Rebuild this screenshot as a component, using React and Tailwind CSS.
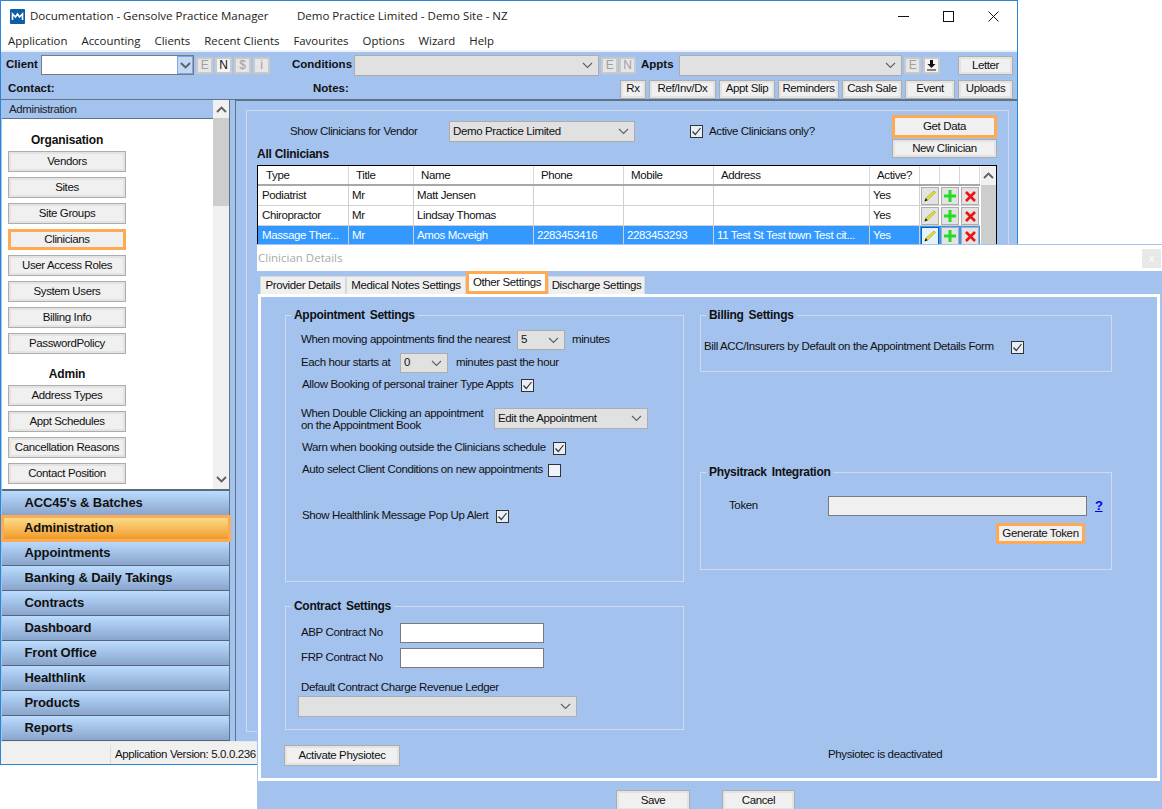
import React from "react";

const Chevron = ({ className = "", bold }) => (
  <svg width="11" height="7" viewBox="0 0 11 7" className={className} fill="none" stroke="#606060" strokeWidth={bold ? 1.9 : 1.1}><path d="M1 1l4.500 4.500L10 1" /></svg>
);
const Check = () => (
  <span className="flex h-[13px] w-[13px] shrink-0 items-center justify-center border border-[#333] bg-[#e8eef8]">
    <svg width="11" height="11" viewBox="0 0 11 11" fill="none" stroke="#333" strokeWidth="1.2"><path d="M1.500 5.500l2.800 3L9.500 2" /></svg>
  </span>
);
const Btn = ({ children, className = "", hot }) => (
  <div className={`flex shrink-0 items-center justify-center whitespace-nowrap text-[#111] ${hot ? "border-[3px] border-[#ffa952] bg-[#f0f0f0]" : "border border-[#adadad] bg-[#f0f0f0] shadow-[inset_0_0_0_2px_#e3e3e3]"} ${className}`}>{children}</div>
);
const Select = ({ value, className = "" }) => (
  <div className={`flex shrink-0 items-center justify-between border border-[#adadad] bg-[#e1e1e1] pl-[3px] pr-[5px] text-[#111] ${className}`}>
    <span className="whitespace-nowrap">{value}</span><Chevron />
  </div>
);
const Mini = ({ children, on, className = "" }) => (
  <div className={`flex h-[17px] w-[17px] shrink-0 items-center justify-center border-2 border-[#c9c9c9] text-[12px] ${on ? "border-[#bcbcbc] bg-[#f4f4f4] text-[#111]" : "bg-[#e6e6e6] text-[#a0a0a0]"} ${className}`}>{children}</div>
);
const Group = ({ title, className = "", children }) => (
  <div className={`relative border border-[#cfdbea] ${className}`}>
    <span className="absolute -top-[10px] left-[5px] whitespace-nowrap bg-[#a3c2ee] px-[3px] text-[12px] font-bold tracking-[-0.3px] [word-spacing:2px] text-[#111]">{title}</span>
    {children}
  </div>
);

const Pencil = () => (
  <svg width="16" height="16" viewBox="0 0 16 16"><path d="M3 13l1-3 8-7 1.500 1.500-8 7.500z" fill="#f3e600" stroke="#777" strokeWidth=".5" /><path d="M2.500 13.500l1.200-3.300 2 2z" fill="#111" /></svg>
);
const Plus = () => (
  <svg width="14" height="14" viewBox="0 0 14 14"><path d="M5.500 1h3v4.500H13v3H8.500V13h-3V8.500H1v-3h4.500z" fill="#22dd22" /></svg>
);
const Cross = () => (
  <svg width="13" height="13" viewBox="0 0 13 13"><path d="M2 2l9 9M11 2l-9 9" stroke="#ee1111" strokeWidth="2.600" /></svg>
);
const IconBtn = ({ children, sel, focus }) => (
  <div className={`flex h-[20px] w-[20px] items-center justify-center ${sel ? "bg-[#3399ff]" : ""}`}>
    <div className={`flex h-[18px] w-[18px] items-center justify-center border ${focus ? "border-[#0a5fb0] bg-[#e5f1fb]" : "border-[#adadad] bg-[#e3e3e3]"}`}>{children}</div>
  </div>
);

const rows = [
  ["Podiatrist", "Mr", "Matt Jensen", "", "", "", "Yes"],
  ["Chiropractor", "Mr", "Lindsay Thomas", "", "", "", "Yes"],
  ["Massage Ther...", "Mr", "Amos Mcveigh", "2283453416", "2283453293", "11 Test St Test town Test cit...", "Yes"],
];
const cols = "grid-cols-[91px_65px_120px_90px_90px_156px_50px_20px_20px_20px]";

const org = ["Vendors", "Sites", "Site Groups", "Clinicians", "User Access Roles", "System Users", "Billing Info", "PasswordPolicy"];
const admin = ["Address Types", "Appt Schedules", "Cancellation Reasons", "Contact Position", ""];
const nav = ["ACC45's & Batches", "Administration", "Appointments", "Banking & Daily Takings", "Contracts", "Dashboard", "Front Office", "Healthlink", "Products", "Reports"];
const tools = [["Rx", "w-[26px]"], ["Ref/Inv/Dx", "w-[67px]"], ["Appt Slip", "w-[56px]"], ["Reminders", "w-[61px]"], ["Cash Sale", "w-[60px]"], ["Event", "w-[50px]"], ["Uploads", "w-[55px]"]];

export default function App() {
  return (
    <div className="relative h-[809px] w-[1162px] overflow-hidden bg-white font-['Liberation_Sans',sans-serif] text-[11.5px] tracking-[-0.38px] text-[#111] [&_b]:tracking-normal">
      {/* Main window */}
      <div className="absolute left-0 top-0 flex h-[765px] w-[1018px] flex-col border border-[#2b87d3] bg-white">
        <div className="flex h-[30px] shrink-0 items-center pl-[9px] font-['Open_Sans',sans-serif] text-[11.5px] tracking-normal text-[#222]">
          <svg width="15" height="15" viewBox="0 0 15 15"><rect width="15" height="15" rx="1" fill="#0d5ea6" /><path d="M2.500 11V5l3 3 2-3 2 3 3-3v6" fill="none" stroke="#fff" strokeWidth="1.600" /></svg>
          <span className="ml-[5px] w-[267px] whitespace-nowrap">Documentation - Gensolve Practice Manager</span>
          <span className="whitespace-nowrap">Demo Practice Limited - Demo Site - NZ</span>
          <div className="ml-auto flex items-center gap-[34px] pr-[18px]">
            <svg width="11" height="11" viewBox="0 0 11 11" stroke="#111" fill="none"><path d="M0 5.500h11" /></svg>
            <svg width="11" height="11" viewBox="0 0 11 11" stroke="#111" fill="none"><rect x=".5" y=".5" width="10" height="10" /></svg>
            <svg width="11" height="11" viewBox="0 0 11 11" stroke="#111" fill="none"><path d="M.5.500l10 10M10.500.500l-10 10" /></svg>
          </div>
        </div>
        <div className="flex h-[19px] shrink-0 items-center gap-[14px] pl-[7px] font-['Open_Sans',sans-serif] text-[11.4px] tracking-normal text-[#222]">
          {["Application", "Accounting", "Clients", "Recent Clients", "Favourites", "Options", "Wizard", "Help"].map((m) => <span key={m} className="whitespace-nowrap">{m}</span>)}
        </div>
        <div className="flex min-h-0 flex-1 flex-col bg-[#a3c2ee]">
          {/* toolbar */}
          <div className="h-[50px] shrink-0 border-b border-[#5f7386] border-t-2 border-t-[#eef2f8]">
            <div className="flex h-[27px] items-center pb-px pl-[5px]">
              <b className="w-[35px]">Client</b>
              <div className="flex h-[20px] w-[153px] items-center justify-end border border-[#7a7a7a] bg-white">
                <div className="flex h-[18px] w-[16px] items-center justify-center border border-[#7ea6e0] bg-[#c3d8f5]"><Chevron bold /></div>
              </div>
              <Mini className="ml-[2px]">E</Mini><Mini on className="ml-[2px]">N</Mini><Mini className="ml-[2px]">$</Mini><Mini className="ml-[2px]">i</Mini>
              <b className="ml-[22px] w-[62px]">Conditions</b>
              <Select className="h-[21px] w-[245px]" />
              <Mini className="ml-[2px]">E</Mini><Mini className="ml-[1px]">N</Mini>
              <b className="ml-[5px] w-[38px]">Appts</b>
              <Select className="h-[21px] w-[223px]" />
              <Mini className="ml-[2px]">E</Mini>
              <Mini on className="ml-[2px] text-[#111]"><svg width="11" height="11" viewBox="0 0 11 11"><path d="M4 0h3v4h2.500L5.500 8 1.500 4H4zM1 9.500h9v1H1z" fill="#111" /></svg></Mini>
              <Btn className="ml-[18px] h-[19px] w-[55px] pt-px">Letter</Btn>
            </div>
            <div className="flex h-[20px] items-center pl-[7px]">
              <b className="w-[305px]">Contact:</b><b className="w-[307px]">Notes:</b>
              <div className="flex gap-[3px]">
                {tools.map(([t, w]) => <Btn key={t} className={`h-[19px] ${w}`}>{t}</Btn>)}
              </div>
            </div>
          </div>
          {/* body */}
          <div className="flex min-h-0 flex-1">
            {/* sidebar */}
            <div className="ml-px flex w-[228px] shrink-0 flex-col border-r border-[#5f7386]">
              <div className="relative h-[389px] shrink-0 overflow-hidden bg-white">
                <div className="h-[19px] w-[212px] border-b border-[#5f7386] bg-[#a3c2ee] pl-[7px] leading-[18px] text-[#222]">Administration</div>
                <div className="absolute right-0 top-0 flex h-full w-[16px] flex-col items-center bg-[#f0f0f0]">
                  <Chevron bold className="mt-[6px] rotate-180" />
                  <div className="mt-[5px] h-[88px] w-full bg-[#cdcdcd]" />
                  <Chevron bold className="mb-[6px] mt-auto" />
                </div>
                <div className="flex w-[124px] flex-col items-center pl-[6px] pt-[14px]">
                  <b className="h-[18px] text-[12px] leading-[15px] !tracking-[-0.15px]">Organisation</b>
                  <div className="flex flex-col gap-[5px]">
                    {org.map((o) => <Btn key={o} hot={o === "Clinicians"} className="h-[21px] w-[118px]">{o}</Btn>)}
                  </div>
                  <b className="mt-[12px] h-[19px] text-[12px] leading-[17px] !tracking-[-0.15px]">Admin</b>
                  <div className="flex flex-col gap-[5px]">
                    {admin.map((o, i) => <Btn key={i} className="h-[21px] w-[118px]">{o}</Btn>)}
                  </div>
                </div>
              </div>
              <div className="flex flex-1 flex-col border-t-2 border-t-[#5a6a7c]">
                {nav.map((n) => n === "Administration" ? (
                  <div key={n} className="relative z-10 -my-px -ml-px -mr-[2px] flex h-[27px] items-center border-[3px] border-[#ffa952] bg-gradient-to-b from-[#fbdb85] to-[#f09a20] pb-[2px] pl-[20px] text-[13px] font-bold tracking-[-0.15px]">{n}</div>
                ) : (
                  <div key={n} className="flex h-[25px] items-center border-b border-[#56667a] bg-gradient-to-b from-[#bbdcff] to-[#8aa5cd] pl-[22.5px] text-[13px] font-bold tracking-[-0.12px]">{n}</div>
                ))}
              </div>
            </div>
            {/* content */}
            <div className="ml-[5px] min-w-0 flex-1 border-l border-t border-[#5f7386] pl-[10px] pr-[8px] pt-[9px]">
              <div className="h-[622px] border border-[#cfdbea] pl-[10px] pr-[11px]">
                <div className="flex justify-between">
                  <div>
                    <div className="mt-[10px] flex h-[21px] items-center">
                      <span className="ml-[33px] w-[159px] whitespace-nowrap">Show Clinicians for Vendor</span>
                      <Select value="Demo Practice Limited" className="h-[21px] w-[186px]" />
                      <span className="ml-[55px]"><Check /></span>
                      <span className="ml-[6px] whitespace-nowrap">Active Clinicians only?</span>
                    </div>
                    <b className="mt-[5px] block text-[12px] leading-[14px] !tracking-[-0.25px]">All Clinicians</b>
                  </div>
                  <div className="mt-[4px] flex flex-col">
                    <Btn hot className="h-[23px] w-[105px]">Get Data</Btn>
                    <Btn className="mt-px h-[19px] w-[105px]">New Clinician</Btn>
                  </div>
                </div>
                <div className="mt-[4px] flex h-[140px] w-[740px] border border-black bg-white">
                  <div className="w-[722px]">
                    <div className={`grid h-[20px] ${cols} border-b-2 border-[#a8a8a8]`}>
                      {["Type", "Title", "Name", "Phone", "Mobile", "Address", "Active?", "", "", ""].map((h, i) => (
                        <div key={i} className={`border-r border-[#d8d8d8] leading-[18px] ${i === 0 ? "pl-[8px]" : "pl-[7px]"}`}>{h}</div>
                      ))}
                    </div>
                    {rows.map((r, ri) => (
                      <div key={ri} className={`grid h-[20px] ${cols} border-b border-[#d0d0d0] ${ri === 2 ? "bg-[#3399ff] text-white" : ""}`}>
                        {r.map((c, i) => <div key={i} className={`overflow-hidden whitespace-nowrap border-r border-[#d0d0d0] leading-[19px] ${i === 0 ? "pl-[4px]" : "pl-[3px]"}`}>{c}</div>)}
                        <IconBtn sel={ri === 2} focus={ri === 2}><Pencil /></IconBtn>
                        <IconBtn sel={ri === 2}><Plus /></IconBtn>
                        <IconBtn sel={ri === 2}><Cross /></IconBtn>
                      </div>
                    ))}
                  </div>
                  <div className="ml-px flex w-[16px] flex-col items-center bg-[#f0f0f0]">
                    <Chevron bold className="mt-[6px] rotate-180" />
                    <div className="mt-[6px] h-[70px] w-full bg-[#cdcdcd]" />
                  </div>
                </div>
              </div>
            </div>
          </div>
          {/* status */}
          <div className="flex h-[23px] shrink-0 items-center border-t border-[#e6e6e6] bg-[#f0f0f0] pt-[3px]">
            <div className="h-full w-[110px] border-r border-[#dcdcdc]" />
            <span className="ml-[4px] whitespace-nowrap">Application Version: 5.0.0.236</span>
          </div>
        </div>
      </div>

      {/* Dialog */}
      <div className="absolute left-[257px] top-[244px] flex h-[565px] w-[905px] flex-col overflow-hidden border-t border-[#a3c2ee] bg-[#a3c2ee]">
        <div className="flex h-[26px] shrink-0 items-center justify-between bg-white pr-px">
          <span className="pl-px font-['Open_Sans',sans-serif] text-[11.5px] tracking-normal text-[#a9a9a9]">Clinician Details</span>
          <div className="flex h-[19px] w-[19px] items-center justify-center bg-[#e8e8e8] text-[11px] text-white">x</div>
        </div>
        <div className="flex h-[23px] shrink-0 items-end whitespace-nowrap pl-[3px]">
          <div className="flex h-[18px] w-[86px] items-center justify-center border border-b-0 border-[#d9d9d9] bg-[#f0f0f0]">Provider Details</div>
          <div className="flex h-[18px] w-[120px] items-center justify-center border border-b-0 border-[#d9d9d9] bg-[#f0f0f0]">Medical Notes Settings</div>
          <div className="relative z-10 flex h-[23px] w-[82px] items-center justify-center border-[3px] border-[#ffa952] bg-white">Other Settings</div>
          <div className="flex h-[18px] w-[97px] items-center justify-center border border-b-0 border-[#d9d9d9] bg-[#f0f0f0]">Discharge Settings</div>
        </div>
        <div className="ml-px flex h-[487px] w-[902px] shrink-0 border-[3px] border-white">
          <div className="ml-[24px] w-[399px] shrink-0">
            <Group title="Appointment Settings" className="mt-[18px] h-[267px]">
              <div className="ml-[15px] mt-[14px] flex h-[20px] items-center">
                <span className="w-[216px] whitespace-nowrap">When moving appointments find the nearest</span>
                <Select value="5" className="h-[20px] w-[48px]" />
                <span className="ml-[7px]">minutes</span>
              </div>
              <div className="ml-[15px] mt-[3px] flex h-[20px] items-center">
                <span className="w-[99px] whitespace-nowrap">Each hour starts at</span>
                <Select value="0" className="h-[20px] w-[48px]" />
                <span className="ml-[8px] whitespace-nowrap">minutes past the hour</span>
              </div>
              <div className="ml-[16px] mt-[2px] flex h-[20px] items-center">
                <span className="w-[219px] whitespace-nowrap">Allow Booking of personal trainer Type Appts</span><Check />
              </div>
              <div className="ml-[15px] mt-[9px] flex h-[30px] items-center">
                <span className="w-[193px] whitespace-nowrap leading-[12px]">When Double Clicking an appointment<br />on the Appointment Book</span>
                <Select value="Edit the Appointment" className="-mt-[1px] h-[21px] w-[154px]" />
              </div>
              <div className="ml-[16px] mt-[4px] flex h-[20px] items-center">
                <span className="w-[251px] whitespace-nowrap">Warn when booking outside the Clinicians schedule</span><Check />
              </div>
              <div className="ml-[16px] mt-[2px] flex h-[20px] items-center">
                <span className="w-[246px] whitespace-nowrap">Auto select Client Conditions on new appointments</span>
                <span className="h-[13px] w-[13px] border border-[#333] bg-[#eef3fb]" />
              </div>
              <div className="ml-[16px] mt-[26px] flex h-[20px] items-center">
                <span className="w-[194px] whitespace-nowrap">Show Healthlink Message Pop Up Alert</span><Check />
              </div>
            </Group>
            <Group title="Contract Settings" className="mt-[24px] h-[124px]">
              <div className="ml-[15px] mt-[16px] flex h-[20px] items-center">
                <span className="w-[99px] whitespace-nowrap">ABP Contract No</span>
                <div className="h-[20px] w-[144px] border border-[#7a7a7a] bg-white" />
              </div>
              <div className="ml-[15px] mt-[5px] flex h-[20px] items-center">
                <span className="w-[99px] whitespace-nowrap">FRP Contract No</span>
                <div className="h-[20px] w-[144px] border border-[#7a7a7a] bg-white" />
              </div>
              <div className="ml-[15px] mt-[12px] whitespace-nowrap leading-[14px]">Default Contract Charge Revenue Ledger</div>
              <Select className="ml-[12px] mt-[2px] h-[21px] w-[279px]" />
            </Group>
            <Btn className="-ml-px mt-[15px] h-[21px] w-[116px]">Activate Physiotec</Btn>
          </div>
          <div className="ml-[16px] w-[412px] shrink-0">
            <Group title="Billing Settings" className="mt-[18px] h-[57px]">
              <div className="ml-[3px] mt-[21px] flex h-[20px] items-center">
                <span className="w-[307px] whitespace-nowrap">Bill ACC/Insurers by Default on the Appointment Details Form</span><Check />
              </div>
            </Group>
            <Group title="Physitrack Integration" className="mt-[100px] h-[98px]">
              <div className="mt-[23px] flex h-[20px] items-center">
                <span className="ml-[28px] w-[99px]">Token</span>
                <div className="h-[20px] w-[259px] border border-[#7a7a7a] bg-[#f0f0f0]" />
                <span className="ml-[8px] text-[13px] font-bold text-[#0000ee] underline">?</span>
              </div>
              <Btn hot className="ml-[295px] mt-[7px] h-[21px] w-[89px]">Generate Token</Btn>
            </Group>
            <div className="ml-[128px] mt-[176px] whitespace-nowrap">Physiotec is deactivated</div>
          </div>
        </div>
        <div className="ml-[359px] mt-[9px] flex gap-[32px]">
          <Btn className="h-[21px] w-[74px]">Save</Btn>
          <Btn className="h-[21px] w-[73px]">Cancel</Btn>
        </div>
      </div>
    </div>
  );
}
